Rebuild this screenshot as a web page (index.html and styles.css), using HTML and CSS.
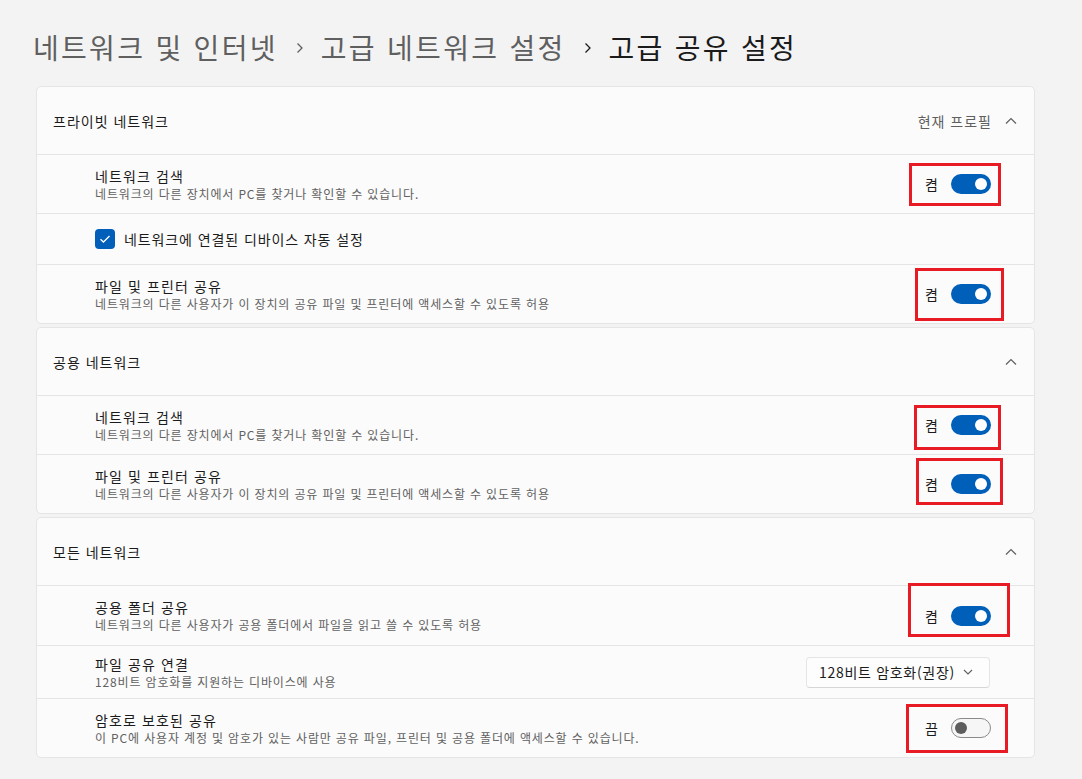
FILE: index.html
```html
<!DOCTYPE html>
<html lang="ko">
<head>
<meta charset="utf-8">
<title>고급 공유 설정</title>
<link rel="stylesheet" href="styles.css">
</head>
<body>
<div class="page">
  <h1 class="crumbs">
    <span class="crumb">네트워크 및 인터넷</span>
    <svg class="crumb-sep" width="8" height="12" viewBox="0 0 8 12"><polyline points="1.5,1.5 6,6 1.5,10.5" fill="none" stroke="#5f5f5f" stroke-width="1.3"/></svg>
    <span class="crumb">고급 네트워크 설정</span>
    <svg class="crumb-sep" width="8" height="12" viewBox="0 0 8 12"><polyline points="1.5,1.5 6,6 1.5,10.5" fill="none" stroke="#1b1b1b" stroke-width="1.3"/></svg>
    <span class="crumb current">고급 공유 설정</span>
  </h1>

  <div class="cards">
    <section class="card">
      <div class="card-head">
        <span class="head-title">프라이빗 네트워크</span>
        <span class="head-meta">현재 프로필</span>
        <svg class="chev-up" width="12" height="8" viewBox="0 0 12 8"><polyline points="1,6.5 6,1.5 11,6.5" fill="none" stroke="#5f5f5f" stroke-width="1.2"/></svg>
      </div>
      <div class="row">
        <div class="row-text">
          <div class="row-title">네트워크 검색</div>
          <div class="row-desc">네트워크의 다른 장치에서 PC를 찾거나 확인할 수 있습니다.</div>
        </div>
        <div class="switch-wrap"><span class="switch-label">켬</span><span class="switch on"></span></div>
      </div>
      <div class="row row-check">
        <span class="checkbox"><svg width="12" height="10" viewBox="0 0 12 10"><polyline points="1.5,5.2 4.5,8 10.5,2" fill="none" stroke="#fff" stroke-width="1.3"/></svg></span>
        <span class="check-label">네트워크에 연결된 디바이스 자동 설정</span>
      </div>
      <div class="row">
        <div class="row-text">
          <div class="row-title">파일 및 프린터 공유</div>
          <div class="row-desc">네트워크의 다른 사용자가 이 장치의 공유 파일 및 프린터에 액세스할 수 있도록 허용</div>
        </div>
        <div class="switch-wrap"><span class="switch-label">켬</span><span class="switch on"></span></div>
      </div>
    </section>

    <section class="card">
      <div class="card-head">
        <span class="head-title">공용 네트워크</span>
        <svg class="chev-up" width="12" height="8" viewBox="0 0 12 8"><polyline points="1,6.5 6,1.5 11,6.5" fill="none" stroke="#5f5f5f" stroke-width="1.2"/></svg>
      </div>
      <div class="row">
        <div class="row-text">
          <div class="row-title">네트워크 검색</div>
          <div class="row-desc">네트워크의 다른 장치에서 PC를 찾거나 확인할 수 있습니다.</div>
        </div>
        <div class="switch-wrap"><span class="switch-label">켬</span><span class="switch on"></span></div>
      </div>
      <div class="row">
        <div class="row-text">
          <div class="row-title">파일 및 프린터 공유</div>
          <div class="row-desc">네트워크의 다른 사용자가 이 장치의 공유 파일 및 프린터에 액세스할 수 있도록 허용</div>
        </div>
        <div class="switch-wrap"><span class="switch-label">켬</span><span class="switch on"></span></div>
      </div>
    </section>

    <section class="card">
      <div class="card-head">
        <span class="head-title">모든 네트워크</span>
        <svg class="chev-up" width="12" height="8" viewBox="0 0 12 8"><polyline points="1,6.5 6,1.5 11,6.5" fill="none" stroke="#5f5f5f" stroke-width="1.2"/></svg>
      </div>
      <div class="row row-tall">
        <div class="row-text">
          <div class="row-title">공용 폴더 공유</div>
          <div class="row-desc">네트워크의 다른 사용자가 공용 폴더에서 파일을 읽고 쓸 수 있도록 허용</div>
        </div>
        <div class="switch-wrap"><span class="switch-label">켬</span><span class="switch on"></span></div>
      </div>
      <div class="row row-select">
        <div class="row-text">
          <div class="row-title">파일 공유 연결</div>
          <div class="row-desc">128비트 암호화를 지원하는 디바이스에 사용</div>
        </div>
        <div class="select">
          <span class="select-text">128비트 암호화(권장)</span>
          <svg width="10" height="6" viewBox="0 0 10 6"><polyline points="1,1 5,5 9,1" fill="none" stroke="#5f5f5f" stroke-width="1.1"/></svg>
        </div>
      </div>
      <div class="row">
        <div class="row-text">
          <div class="row-title">암호로 보호된 공유</div>
          <div class="row-desc">이 PC에 사용자 계정 및 암호가 있는 사람만 공유 파일, 프린터 및 공용 폴더에 액세스할 수 있습니다.</div>
        </div>
        <div class="switch-wrap"><span class="switch-label">끔</span><span class="switch off"></span></div>
      </div>
    </section>
  </div>

  <div class="mark m1"></div>
  <div class="mark m2"></div>
  <div class="mark m3"></div>
  <div class="mark m4"></div>
  <div class="mark m5"></div>
  <div class="mark m6"></div>
</div>
</body>
</html>
```

FILE: styles.css
```css
* { box-sizing: border-box; }

html, body {
  margin: 0;
  padding: 0;
  background: #f3f3f3;
}

body {
  font-family: "Noto Sans CJK KR", "Noto Sans", sans-serif;
  color: #1b1b1b;
  font-size: 14px;
}

.page {
  position: relative;
  width: 1082px;
  height: 779px;
  padding: 0 47px 0 36px;
  overflow: hidden;
}

.crumbs {
  margin: 0 0 0 -3px;
  padding: 28px 0 20px 0;
  height: 86px;
  display: flex;
  align-items: center;
  font-size: 28px;
  line-height: 38px;
  font-weight: 400;
  letter-spacing: 2.3px;
}

.crumb { color: #5f5f5f; white-space: nowrap; }
.crumb.current { color: #1b1b1b; }

.crumb-sep {
  margin: 2px 17px 0 18px;
  flex: none;
}

.cards {
  display: flex;
  flex-direction: column;
  gap: 3px;
}

.card {
  background: #fbfbfb;
  border: 1px solid #e5e5e5;
  border-radius: 5px;
}

.card-head {
  height: 68px;
  display: flex;
  align-items: center;
  padding: 0 17px 0 16px;
  border-bottom: 1px solid #e5e5e5;
}

.head-title {
  flex: 1;
  font-size: 14px;
  line-height: 20px;
  color: #1b1b1b;
  letter-spacing: 1px;
}

.head-meta {
  font-size: 14px;
  line-height: 20px;
  color: #5f5f5f;
  margin-right: 13px;
  letter-spacing: 1px;
}

.chev-up { flex: none; display: block; }

.row {
  height: 59px;
  display: flex;
  align-items: center;
  padding: 0 43px 0 58px;
  border-bottom: 1px solid #e5e5e5;
}

.row:last-child { border-bottom: none; height: 58px; }

.row-tall { height: 60px; }
.row-select { height: 53px; }

.row-check { height: 51px; }

.row-text {
  flex: 1;
  display: flex;
  flex-direction: column;
}

.row-title {
  font-size: 14px;
  line-height: 19px;
  color: #1b1b1b;
  letter-spacing: 1.1px;
}

.row-desc {
  font-size: 12px;
  line-height: 16px;
  color: #616161;
  letter-spacing: 0.85px;
}

.switch-wrap {
  display: flex;
  align-items: center;
  gap: 13px;
}

.switch-label {
  font-size: 14px;
  line-height: 20px;
  color: #1b1b1b;
}

.switch {
  position: relative;
  width: 40px;
  height: 20px;
  border-radius: 10px;
  display: block;
}

.switch::after {
  content: "";
  position: absolute;
  top: 4px;
  width: 12px;
  height: 12px;
  border-radius: 50%;
}

.switch.on { background: #005fb8; }
.switch.on::after { right: 4px; background: #ffffff; }

.switch.off { background: #f6f6f6; border: 1px solid #8a8a8a; }
.switch.off::after { left: 3px; top: 3px; background: #5d5d5d; }

.checkbox {
  width: 20px;
  height: 20px;
  border-radius: 4px;
  background: #005fb8;
  display: flex;
  align-items: center;
  justify-content: center;
  margin-right: 9px;
}

.checkbox svg { display: block; }

.check-label {
  font-size: 14px;
  line-height: 20px;
  color: #1b1b1b;
  letter-spacing: 0.9px;
}

.select {
  width: 184px;
  height: 31px;
  margin-right: 1px;
  background: #fdfdfd;
  border: 1px solid #e5e5e5;
  border-bottom-color: #d6d6d6;
  border-radius: 4px;
  display: flex;
  align-items: center;
  justify-content: space-between;
  padding: 0 16px 0 12px;
}

.select-text {
  font-size: 14px;
  line-height: 20px;
  color: #1b1b1b;
  letter-spacing: 0.7px;
}

.select svg { display: block; }

.mark {
  position: absolute;
  border: 3px solid #e81a24;
}

.m1 { left: 909px; top: 163px; width: 92px; height: 43px; }
.m2 { left: 915px; top: 268px; width: 89px; height: 53px; }
.m3 { left: 914px; top: 405px; width: 87px; height: 45px; }
.m4 { left: 916px; top: 458px; width: 87px; height: 47px; }
.m5 { left: 908px; top: 583px; width: 102px; height: 54px; }
.m6 { left: 906px; top: 704px; width: 102px; height: 49px; }
```
